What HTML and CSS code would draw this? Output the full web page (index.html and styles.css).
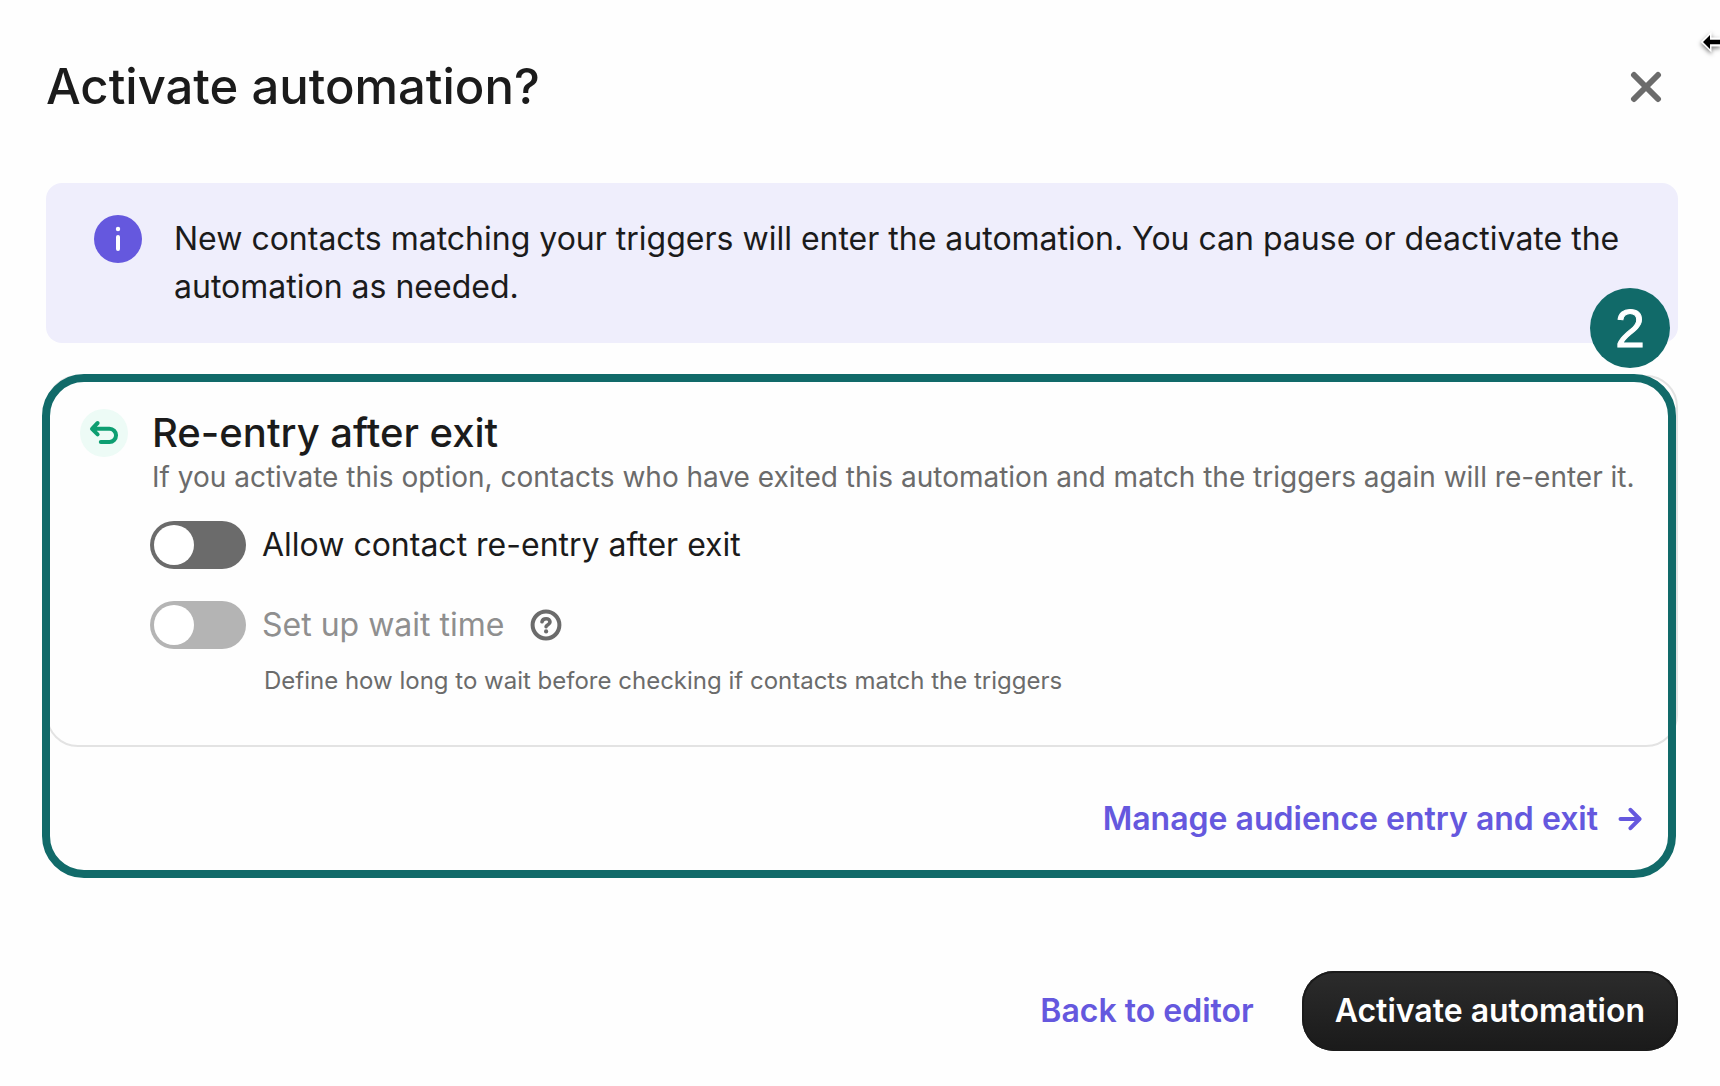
FILE: index.html
```
<!DOCTYPE html>
<html lang="en">

<head>
  <meta charset="UTF-8">
  <title>Activate automation</title>
  <link rel="stylesheet" href="styles.css">
</head>

<body>
  <div class="dialog" role="dialog" aria-labelledby="dialog-title">

    <div class="dialog-header">
      <h1 id="dialog-title">Activate automation?</h1>
      <button type="button" class="close-btn" aria-label="Close">
        <svg width="32" height="32" viewBox="0 0 32 32">
          <path d="M4 4L28 28M28 4L4 28" fill="none" stroke="currentColor" stroke-width="6" stroke-linecap="round" />
        </svg>
      </button>
    </div>

    <div class="alert">
      <svg class="alert-icon" width="48" height="48" viewBox="0 0 48 48">
        <circle cx="24" cy="24" r="24" fill="#6558de" />
        <circle cx="24" cy="14" r="2.2" fill="#fff" />
        <path d="M24 22V34" stroke="#fff" stroke-width="4" stroke-linecap="round" />
      </svg>
      <p>New contacts matching your triggers will enter the automation. You can pause or deactivate the automation as needed.</p>
    </div>

    <div class="reentry">
      <div class="card">
        <svg class="card-icon" width="48" height="48" viewBox="0 0 48 48">
          <circle cx="24" cy="24" r="24" fill="#edfbf6" />
          <path d="M17.6 14L12 19.8L17.6 25.4M12.4 19.8H29.5A6.5 6.5 0 0 1 29.5 32.9H20.8" fill="none" stroke="#0d9e71"
            stroke-width="4" stroke-linecap="round" stroke-linejoin="round" />
        </svg>
        <div class="card-body">
          <h2>Re-entry after exit</h2>
          <p class="description">If you activate this option, contacts who have exited this automation and match the triggers again will re-enter it.</p>
          <div class="option">
            <input type="checkbox" class="switch" id="allow-reentry">
            <label for="allow-reentry">Allow contact re-entry after exit</label>
          </div>
          <div class="option">
            <input type="checkbox" class="switch" id="wait-time" disabled>
            <label for="wait-time">Set up wait time</label>
            <button type="button" class="help-btn" aria-label="Help">
              <svg width="32" height="32" viewBox="0 0 32 32" fill="none" stroke="currentColor">
                <circle cx="16" cy="16" r="13.4" stroke-width="4" />
                <path d="M12 12.8C12.4 10.8 14 9.8 16.1 9.8C18.4 9.8 20 11.1 20 13C20 15.6 16.4 15.6 16.1 17.6"
                  stroke-width="3.6" stroke-linecap="round" />
                <circle cx="16.1" cy="22.4" r="2.1" fill="currentColor" stroke="none" />
              </svg>
            </button>
          </div>
          <p class="hint">Define how long to wait before checking if contacts match the triggers</p>
        </div>
      </div>
      <a href="#" class="link manage-link">
        Manage audience entry and exit
        <svg width="24" height="24" viewBox="0 0 24 24">
          <path d="M2.5 12H21M12.5 2.8L21.5 12L12.5 21.2" fill="none" stroke="currentColor" stroke-width="4"
            stroke-linecap="round" stroke-linejoin="round" />
        </svg>
      </a>
      <span class="step-badge">2</span>
    </div>

    <div class="dialog-footer">
      <a href="#" class="link">Back to editor</a>
      <button type="button" class="primary-btn">Activate automation</button>
    </div>
  </div>

  <!-- resize cursor at the window edge -->
  <svg class="cursor" width="20" height="28" viewBox="0 0 20 28">
    <path d="M0.5 13L11.5 2.5V8.5H20V17.5H11.5V23.5Z" fill="#fff" />
    <path d="M3 13L10 6V10.8H20V15.2H10V20Z" fill="#000" />
  </svg>
</body>

</html>
```
FILE: styles.css
```
* {
  box-sizing: border-box;
}

body {
  margin: 0;
  position: relative;
  overflow-x: hidden;
  font-family: Inter, "Liberation Sans", sans-serif;
  font-size: 32px;
  line-height: 48px;
  color: #1b1b1b;
  background-color: #fefefe;
}

h1,
h2,
p {
  margin: 0;
}

button {
  font: inherit;
  border: none;
  padding: 0;
  background: none;
  cursor: pointer;
}

svg {
  display: block;
  flex-shrink: 0;
}

.dialog {
  padding: 48px 42px 32px 46px;
}

.dialog-header {
  display: flex;
  justify-content: space-between;
  align-items: center;
  height: 78px;
  margin-bottom: 57px;
}

h1 {
  font-size: 49px;
  line-height: 64px;
  font-weight: 500;
}

h2 {
  font-size: 40px;
  line-height: 48px;
  font-weight: 500;
}

.close-btn {
  padding: 16px;
  color: #6b6b6b;
}

.alert {
  display: flex;
  gap: 32px;
  padding: 32px 48px;
  border-radius: 16px;
  background-color: #efeefc;
}

/* re-entry section */
.reentry {
  position: relative;
  margin-top: 32px;
  padding-bottom: 35px;
}

.reentry::after {
  content: "";
  position: absolute;
  inset: -1px 2px 0 -4px;
  border: 8px solid #116a69;
  border-radius: 42px;
  pointer-events: none;
}

.card {
  display: flex;
  gap: 24px;
  padding: 32px 32px 48px;
  border: 2px solid #e3e3e3;
  border-radius: 32px;
}

.card-body {
  min-width: 0;
}

.description {
  font-size: 28px;
  line-height: 40px;
  color: #6b6b6b;
}

.option {
  display: flex;
  align-items: center;
  gap: 16px;
  margin-top: 24px;
  margin-left: -2px;
}

.option + .option {
  margin-top: 32px;
}

.switch {
  appearance: none;
  flex-shrink: 0;
  width: 96px;
  height: 48px;
  margin: 0;
  padding: 4px;
  border-radius: 24px;
  background-color: #6b6b6b;
}

.switch::before {
  content: "";
  display: block;
  width: 40px;
  height: 40px;
  border-radius: 50%;
  background-color: #fff;
}

.switch:checked::before {
  margin-left: auto;
}

.switch:disabled {
  background-color: #b4b4b4;
}

.switch:disabled + label {
  color: #8f8f8f;
}

.help-btn {
  margin-left: 10px;
  color: #6b6b6b;
}

.hint {
  margin: 16px 0 0 112px;
  font-size: 24px;
  line-height: 32px;
  color: #6b6b6b;
}

.link {
  color: #6558de;
  font-weight: 600;
  text-decoration: none;
}

.manage-link {
  display: flex;
  justify-content: flex-end;
  align-items: center;
  gap: 20px;
  margin-top: 48px;
  padding-right: 36px;
}

.step-badge {
  position: absolute;
  top: -87px;
  right: 8px;
  width: 80px;
  height: 80px;
  border-radius: 50%;
  font-family: "Liberation Sans", Arial, sans-serif;
  font-size: 53px;
  line-height: 82px;
  text-align: center;
  color: #fff;
  background-color: #116a69;
  -webkit-text-stroke: 1px #fff;
}

.dialog-footer {
  display: flex;
  justify-content: flex-end;
  align-items: center;
  gap: 48px;
  margin-top: 93px;
}

.primary-btn {
  padding: 16px 33px;
  border-radius: 32px;
  font-weight: 600;
  color: #fff;
  background-image: linear-gradient(#2c2c2c, #1a1a1a);
  box-shadow: inset 0 0 0 2px #1b1b1b;
}

.cursor {
  position: absolute;
  top: 29px;
  right: 0;
  filter: drop-shadow(0 2px 2px rgba(0, 0, 0, 0.5));
}
```
